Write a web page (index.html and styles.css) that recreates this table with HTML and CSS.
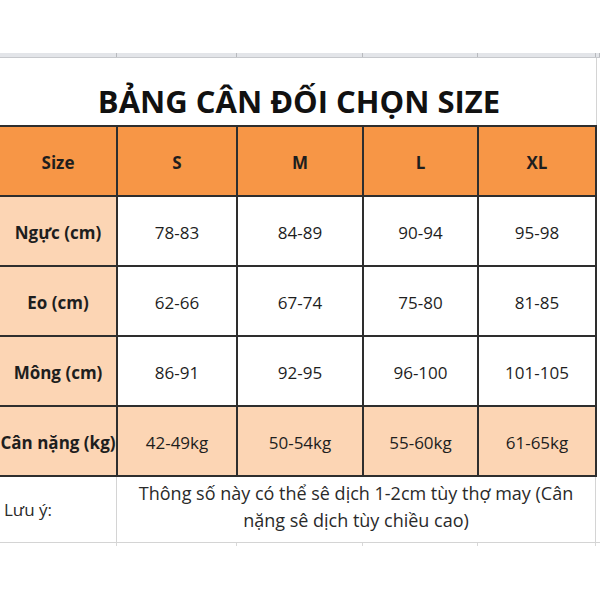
FILE: index.html
```html
<!DOCTYPE html>
<html lang="vi">
<head>
<meta charset="utf-8">
<title>Bảng cân đối chọn size</title>
<link rel="stylesheet" href="styles.css">
</head>
<body>
<div class="page">
  <div class="colhead">
    <span class="ch c1"></span><span class="ch c2"></span><span class="ch c3"></span><span class="ch c4"></span><span class="ch c5"></span><span class="ch c6"></span>
  </div>
  <div class="title-row">
    <h1 class="title">BẢNG CÂN ĐỐI CHỌN SIZE</h1>
  </div>
  <div class="chart">
    <div class="cell head">Size</div>
    <div class="cell head">S</div>
    <div class="cell head">M</div>
    <div class="cell head">L</div>
    <div class="cell head">XL</div>

    <div class="cell label">Ngực (cm)</div>
    <div class="cell">78-83</div>
    <div class="cell">84-89</div>
    <div class="cell">90-94</div>
    <div class="cell">95-98</div>

    <div class="cell label">Eo (cm)</div>
    <div class="cell">62-66</div>
    <div class="cell">67-74</div>
    <div class="cell">75-80</div>
    <div class="cell">81-85</div>

    <div class="cell label">Mông (cm)</div>
    <div class="cell">86-91</div>
    <div class="cell">92-95</div>
    <div class="cell">96-100</div>
    <div class="cell">101-105</div>

    <div class="cell label">Cân nặng (kg)</div>
    <div class="cell peach">42-49kg</div>
    <div class="cell peach">50-54kg</div>
    <div class="cell peach">55-60kg</div>
    <div class="cell peach">61-65kg</div>
  </div>
  <div class="note-row">
    <div class="note-label">Lưu ý:</div>
    <div class="note-text">Thông số này có thể sê dịch 1-2cm tùy thợ may (Cân<br>nặng sê dịch tùy chiều cao)</div>
  </div>
  <div class="stubs">
    <span class="stub s1"></span><span class="stub s2"></span><span class="stub s3"></span><span class="stub s4"></span><span class="stub s5"></span><span class="stub s6"></span>
  </div>
</div>
</body>
</html>
```

FILE: styles.css
```css
html, body {
  margin: 0;
  padding: 0;
  background: #ffffff;
}
.page {
  width: 600px;
  height: 600px;
  overflow: hidden;
  font-family: "Open Sans", "Liberation Sans", sans-serif;
  color: #1e1e1e;
}
.colhead {
  margin-top: 53px;
  height: 4px;
  background: #e3e5e9;
  border-bottom: 1px solid #c6c8cc;
  display: grid;
  grid-template-columns: 117px 120px 126px 115px 118px 4px;
}
.ch {
  border-right: 1px solid #b8babe;
}
.title-row {
  height: 67px;
  width: 596px;
  border-right: 1px solid #d4d4d4;
  display: flex;
  align-items: flex-end;
  justify-content: center;
}
.title {
  margin: 0 0 8px 2px;
  font-size: 31px;
  line-height: 31px;
  font-weight: 700;
  color: #111111;
  letter-spacing: 0;
}
.chart {
  margin-left: -2px;
  width: 595px;
  padding: 2px;
  background: #2e2e2e;
  display: grid;
  grid-template-columns: 116px 118px 124px 113px 116px;
  grid-auto-rows: 68px;
  gap: 2px;
}
.cell {
  background: #ffffff;
  display: flex;
  align-items: center;
  justify-content: center;
  font-size: 17px;
  padding-top: 3px;
  box-sizing: border-box;
  white-space: nowrap;
}
.head {
  background: #f79646;
  font-weight: 700;
}
.label {
  background: #fcd5b4;
  font-weight: 700;
}
.peach {
  background: #fcd5b4;
}
.note-row {
  display: grid;
  grid-template-columns: 117px 479px;
  height: 65px;
  border-bottom: 1px solid #d4d4d4;
}
.note-label {
  border-right: 1px solid #d4d4d4;
  display: flex;
  align-items: center;
  padding-left: 4px;
  font-size: 17px;
  color: #2a2a2a;
}
.note-text {
  border-right: 1px solid #d4d4d4;
  text-align: center;
  font-size: 18px;
  line-height: 27px;
  padding-top: 3px;
  color: #2a2a2a;
}
.stubs {
  display: grid;
  grid-template-columns: 117px 120px 126px 115px 118px 4px;
  height: 3px;
}
.stub {
  border-right: 1px solid #d8d8d8;
}
.s6 { border-right: none; }
```
